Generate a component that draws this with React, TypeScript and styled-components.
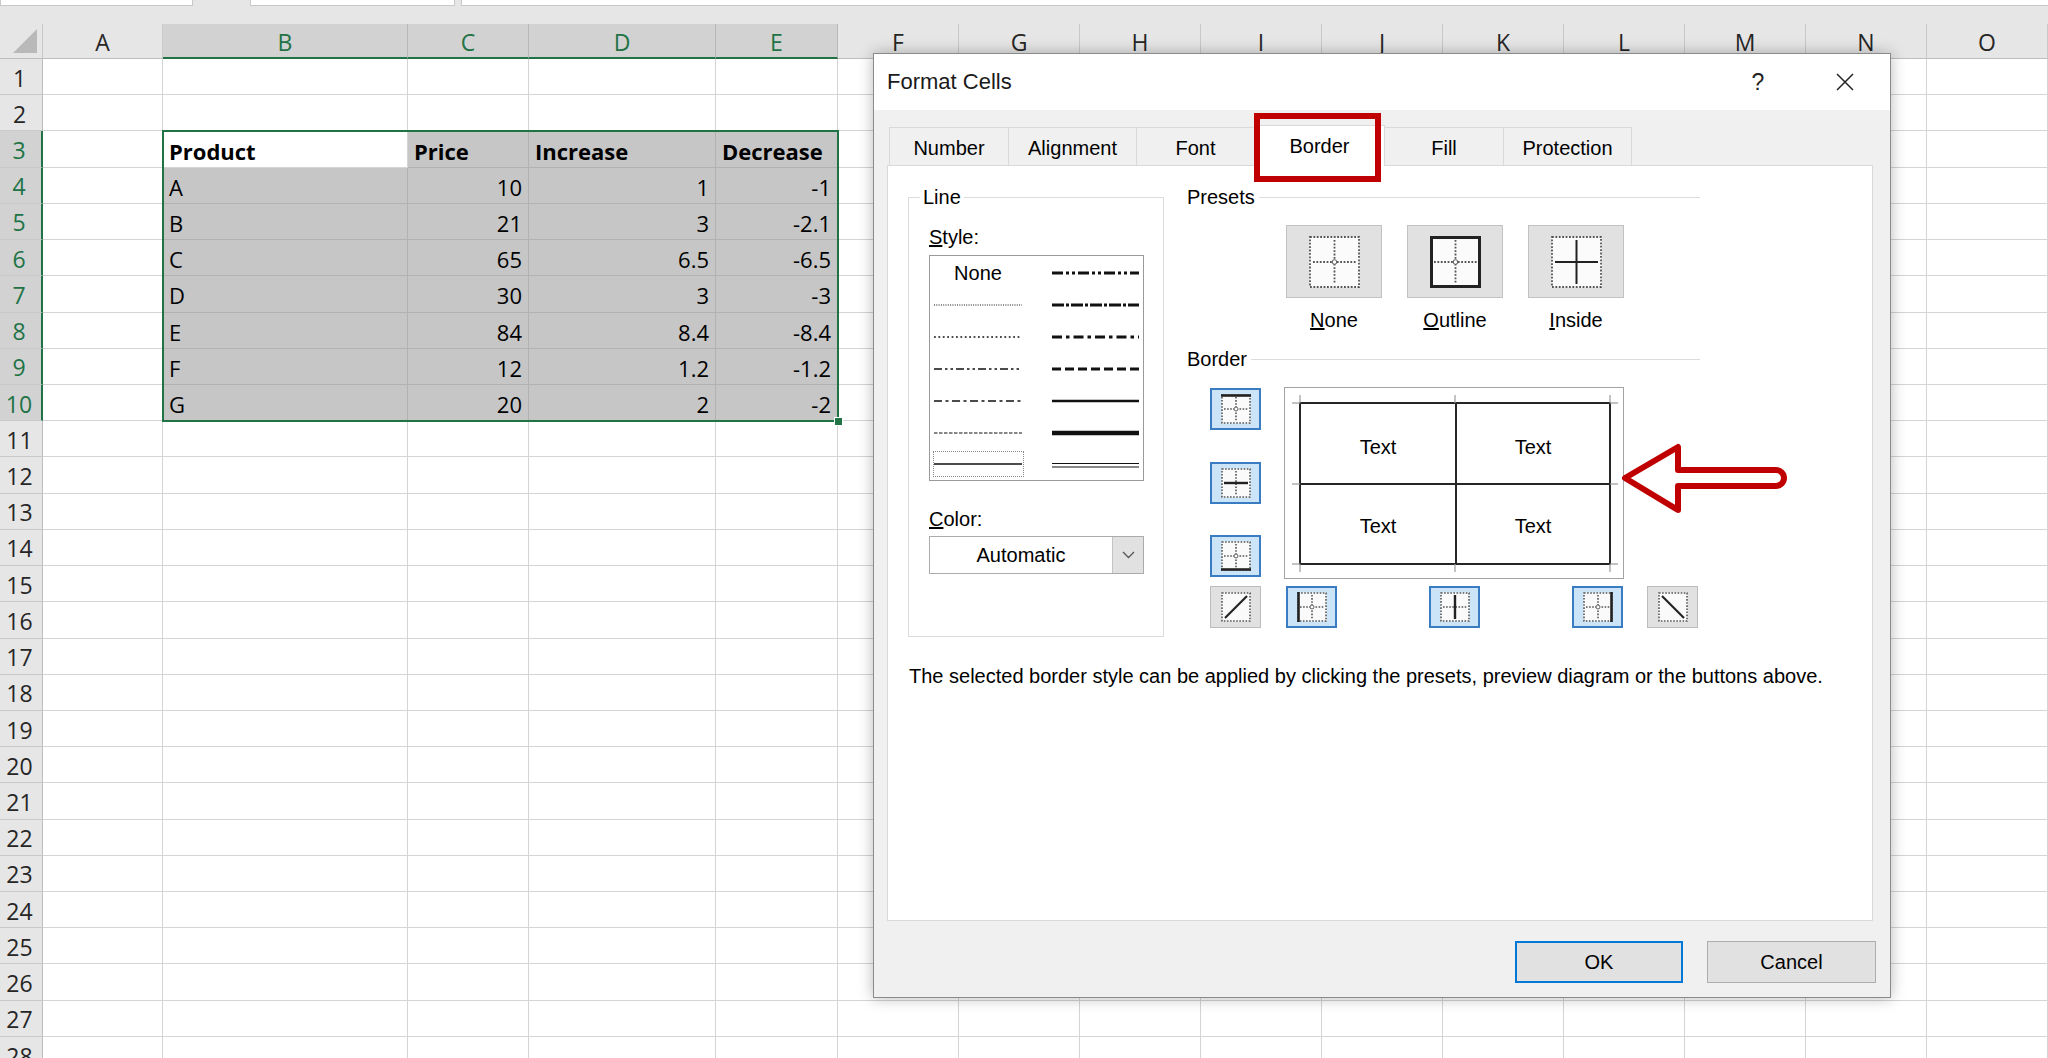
import React from 'react';
import styled, { createGlobalStyle, css } from 'styled-components';

const GREEN = '#217346';
const ROW_H = 36.22;

const GlobalStyle = createGlobalStyle`
  html, body { margin: 0; padding: 0; background: #fff; overflow: hidden; }
  #root { width: 2048px; height: 1058px; }
  *, *::before, *::after { box-sizing: border-box; }
`;

/* ---------------- spreadsheet ---------------- */

const Screen = styled.div`
  position: relative;
  width: 2048px;
  height: 1058px;
  overflow: hidden;
  background: #fff;
  font-family: "Open Sans", "Noto Sans", sans-serif;
`;

const TopStrip = styled.div`
  display: flex;
  height: 24px;
  background: #e6e6e6;
`;

const FieldStub = styled.div<{ $w: number; $ml: number }>`
  flex: none;
  width: ${p => p.$w}px;
  margin-left: ${p => p.$ml}px;
  height: 6px;
  background: #fff;
  border: 1px solid #c8c8c8;
  border-top: none;
`;

const HeaderRow = styled.div`
  display: flex;
  height: 35px;
  background: #e6e6e6;
`;

const Corner = styled.div`
  position: relative;
  flex: none;
  width: 43px;
  border-right: 1px solid #c6c6c6;
  border-bottom: 1px solid #bdbdbd;
  &::after {
    content: '';
    position: absolute;
    right: 5px;
    bottom: 5px;
    border-style: solid;
    border-width: 0 0 24px 24px;
    border-color: transparent transparent #b9b9b9 transparent;
  }
`;

const ColHeader = styled.div<{ $w: number; $sel?: boolean }>`
  flex: none;
  width: ${p => p.$w}px;
  display: flex;
  align-items: center;
  justify-content: center;
  padding-top: 2px;
  font-size: 23px;
  color: ${p => (p.$sel ? GREEN : '#262626')};
  background: ${p => (p.$sel ? '#d2d2d2' : '#e6e6e6')};
  border-right: 1px solid ${p => (p.$sel ? '#b8b8b8' : '#c9c9c9')};
  border-bottom: ${p => (p.$sel ? `2px solid ${GREEN}` : '1px solid #bdbdbd')};
`;

const Row = styled.div`
  display: flex;
  height: ${ROW_H}px;
`;

const RowHeader = styled.div<{ $sel?: boolean }>`
  flex: none;
  width: 43px;
  display: flex;
  align-items: center;
  justify-content: center;
  padding: 2px 3px 0 0;
  font-size: 23px;
  color: ${p => (p.$sel ? GREEN : '#262626')};
  background: ${p => (p.$sel ? '#d2d2d2' : '#e6e6e6')};
  border-right: ${p => (p.$sel ? `2px solid ${GREEN}` : '1px solid #bdbdbd')};
  border-bottom: 1px solid #c9c9c9;
`;

const Cell = styled.div<{ $w: number; $sel?: boolean; $right?: boolean; $bold?: boolean }>`
  flex: none;
  width: ${p => p.$w}px;
  display: flex;
  align-items: center;
  justify-content: ${p => (p.$right ? 'flex-end' : 'flex-start')};
  padding: 3px 6px 0 6px;
  font-size: 22px;
  font-weight: ${p => (p.$bold ? 700 : 400)};
  color: #000;
  white-space: nowrap;
  background: ${p => (p.$sel ? '#c6c6c6' : '#fff')};
  border-right: 1px solid ${p => (p.$sel ? '#b2b2b2' : '#d4d4d4')};
  border-bottom: 1px solid ${p => (p.$sel ? '#b2b2b2' : '#d4d4d4')};
`;

const SelectionFrame = styled.div`
  position: absolute;
  left: 162px;
  top: 130px;
  width: 677px;
  height: 292px;
  border: 2px solid ${GREEN};
  pointer-events: none;
`;

const FillHandle = styled.div`
  position: absolute;
  left: 834px;
  top: 417px;
  width: 9px;
  height: 9px;
  background: ${GREEN};
  border: 1px solid #fff;
`;

/* ---------------- dialog ---------------- */

const Dialog = styled.div`
  position: absolute;
  left: 873px;
  top: 53px;
  width: 1018px;
  height: 945px;
  display: flex;
  flex-direction: column;
  border: 1px solid #8a8a8a;
  background: #f0f0f0;
  box-shadow: 0 0 14px rgba(0, 0, 0, 0.28);
  font-family: "Liberation Sans", Arial, sans-serif;
  font-size: 20px;
  color: #000;
`;

const TitleBar = styled.div`
  flex: none;
  height: 56px;
  display: flex;
  align-items: center;
  padding-left: 13px;
  background: #fff;
`;

const Title = styled.div`
  flex: 1;
  font-size: 22px;
  color: #1a1a1a;
`;

const TitleButton = styled.div<{ $mr: number }>`
  flex: none;
  width: 46px;
  height: 46px;
  margin-right: ${p => p.$mr}px;
  display: flex;
  align-items: center;
  justify-content: center;
  font-size: 23px;
  color: #222;
`;

const Body = styled.div`
  flex: 1;
  display: flex;
  flex-direction: column;
  padding: 17px 17px 0 13px;
`;

const TabStrip = styled.div`
  position: relative;
  z-index: 1;
  display: flex;
  align-items: flex-start;
  height: 38px;
  padding-left: 3px;
`;

const Tab = styled.div<{ $w: number; $active?: boolean }>`
  position: relative;
  flex: none;
  width: ${p => p.$w}px;
  height: 38px;
  margin-left: -1px;
  display: flex;
  align-items: center;
  justify-content: center;
  padding-top: 4px;
  border: 1px solid #d9d9d9;
  border-bottom: none;
  background: #f0f0f0;
  ${p =>
    p.$active &&
    css`
      z-index: 2;
      height: 41px;
      margin-top: -2px;
      padding-top: 0;
      background: #fff;
      &::after {
        content: '';
        position: absolute;
        left: -1px;
        top: -13px;
        width: 127px;
        height: 69px;
        border: 6px solid #c00000;
      }
    `}
`;

const Panel = styled.div`
  flex: none;
  height: 756px;
  background: #fff;
  border: 1px solid #d9d9d9;
  padding: 31px 0 0 20px;
`;

const TopArea = styled.div`
  display: flex;
  align-items: flex-start;
`;

const LineGroup = styled.div`
  position: relative;
  flex: none;
  width: 256px;
  height: 440px;
  border: 1px solid #dcdcdc;
  padding: 28px 0 0 20px;
`;

const GroupLegend = styled.div`
  position: absolute;
  top: -12px;
  left: 11px;
  padding: 0 3px;
  line-height: 23px;
  background: #fff;
`;

const FieldLabel = styled.div<{ $mt?: number }>`
  height: 23px;
  line-height: 23px;
  margin-top: ${p => p.$mt ?? 0}px;
`;

const StyleList = styled.div`
  margin-top: 6px;
  width: 215px;
  height: 226px;
  border: 1px solid #9a9a9a;
  padding-top: 1px;
  display: grid;
  grid-template-columns: 96px 1fr;
  grid-auto-rows: 32px;
`;

const StyleCell = styled.div<{ $right?: boolean }>`
  display: flex;
  align-items: center;
  justify-content: ${p => (p.$right ? 'flex-start' : 'center')};
  padding-left: ${p => (p.$right ? 26 : 0)}px;
`;

const FocusRect = styled.div`
  width: 91px;
  height: 26px;
  margin-top: -2px;
  display: flex;
  align-items: center;
  justify-content: center;
  border: 1px dotted #8a8a8a;
`;

const Dropdown = styled.div`
  margin-top: 5px;
  width: 215px;
  height: 38px;
  display: flex;
  border: 1px solid #ababab;
  background: #fff;
`;

const DropText = styled.div`
  flex: 1;
  text-align: center;
  line-height: 36px;
`;

const DropButton = styled.div`
  flex: none;
  width: 31px;
  display: flex;
  align-items: center;
  justify-content: center;
  background: #e1e1e1;
  border-left: 1px solid #c4c4c4;
`;

const RightCol = styled.div`
  flex: none;
  width: 513px;
  margin-left: 23px;
  margin-top: -11px;
`;

const SectionHeader = styled.div<{ $mt?: number }>`
  display: flex;
  align-items: center;
  gap: 4px;
  height: 23px;
  line-height: 23px;
  margin-top: ${p => p.$mt ?? 0}px;
  &::after {
    content: '';
    flex: 1;
    height: 0;
    border-top: 1px solid #dcdcdc;
  }
`;

const PresetRow = styled.div`
  display: flex;
  gap: 25px;
  margin-top: 16px;
  padding-left: 99px;
`;

const PresetItem = styled.div`
  display: flex;
  flex-direction: column;
  align-items: center;
  width: 96px;
`;

const PresetButton = styled.div`
  width: 96px;
  height: 73px;
  display: flex;
  align-items: center;
  justify-content: center;
  background: #e1e1e1;
  border: 1px solid #c2c2c2;
`;

const PresetLabel = styled.div`
  margin-top: 11px;
  line-height: 23px;
  height: 23px;
`;

const BorderGrid = styled.div`
  display: grid;
  grid-template-columns: 51px 340px 51px;
  grid-template-rows: 192px 42px;
  column-gap: 23px;
  row-gap: 7px;
  margin-top: 16px;
  margin-left: 23px;
`;

const SideToggles = styled.div`
  display: flex;
  flex-direction: column;
  justify-content: space-between;
  padding: 1px 0 2px;
`;

const BottomToggles = styled.div`
  display: flex;
  justify-content: space-between;
  padding: 0 1px 0 2px;
`;

const ToggleButton = styled.div<{ $on?: boolean }>`
  width: 51px;
  height: 42px;
  display: flex;
  align-items: center;
  justify-content: center;
  background: ${p => (p.$on ? '#cce4f7' : '#e1e1e1')};
  border: ${p => (p.$on ? '2px solid #3a7cc2' : '1px solid #bcbcbc')};
`;

const Preview = styled.div`
  position: relative;
  width: 340px;
  height: 192px;
  border: 1px solid #a3a3a3;
  background: #fff;
  padding: 14px 12px 13px 14px;
`;

const PreviewTable = styled.div`
  display: grid;
  grid-template-columns: 156px 1fr;
  grid-template-rows: 81px 1fr;
  height: 100%;
  border: 2px solid #262626;
`;

const PreviewCell = styled.div<{ $r?: boolean; $b?: boolean }>`
  display: flex;
  align-items: center;
  justify-content: center;
  padding-top: ${p => (p.$b ? 7 : 4)}px;
  border-right: ${p => (p.$r ? '2px solid #262626' : 'none')};
  border-bottom: ${p => (p.$b ? '2px solid #262626' : 'none')};
`;

const TickLayer = styled.svg`
  position: absolute;
  left: 0;
  top: 0;
  pointer-events: none;
`;

const Description = styled.div`
  margin-top: 28px;
  margin-left: 1px;
  line-height: 23px;
  white-space: nowrap;
`;

const ButtonRow = styled.div`
  display: flex;
  justify-content: flex-end;
  gap: 24px;
  margin-top: 20px;
  margin-right: -3px;
`;

const DialogButton = styled.div<{ $w: number; $primary?: boolean }>`
  width: ${p => p.$w}px;
  height: 42px;
  display: flex;
  align-items: center;
  justify-content: center;
  background: #e1e1e1;
  border: ${p => (p.$primary ? '2px solid #0078d7' : '1px solid #adadad')};
`;

const Arrow = styled.svg`
  position: absolute;
  left: 1610px;
  top: 435px;
  pointer-events: none;
`;

/* ---------------- drawings ---------------- */

const DOT = '#555';

const PresetIcon: React.FC<{ kind: 'none' | 'outline' | 'inside' }> = ({ kind }) => (
  <svg width="51" height="52" viewBox="0 0 51 52">
    <rect x="0.5" y="0.5" width="50" height="51" fill="#fbfbfb" />
    {kind === 'outline' ? (
      <rect x="1.5" y="1.5" width="48" height="49" fill="none" stroke="#222" strokeWidth="3" />
    ) : (
      <rect x="1" y="1" width="49" height="50" fill="none" stroke={DOT} strokeWidth="1.8" strokeDasharray="1.8 1.6" />
    )}
    {kind === 'inside' ? (
      <>
        <line x1="25.5" y1="4" x2="25.5" y2="48" stroke="#222" strokeWidth="2" />
        <line x1="4" y1="26" x2="47" y2="26" stroke="#222" strokeWidth="2" />
      </>
    ) : (
      <>
        <line x1="25.5" y1="4" x2="25.5" y2="48" stroke={DOT} strokeWidth="1.8" strokeDasharray="1.8 1.6" />
        <line x1="4" y1="26" x2="47" y2="26" stroke={DOT} strokeWidth="1.8" strokeDasharray="1.8 1.6" />
        <circle cx="25.5" cy="26" r="2.3" fill="#fff" stroke={DOT} strokeWidth="1" />
      </>
    )}
  </svg>
);

type Side = 'top' | 'hmid' | 'bottom' | 'left' | 'vmid' | 'right' | 'diagUp' | 'diagDown';

const ToggleIcon: React.FC<{ side: Side }> = ({ side }) => {
  const diag = side === 'diagUp' || side === 'diagDown';
  return (
    <svg width="30" height="30" viewBox="0 0 30 30">
      <rect x="0.5" y="0.5" width="29" height="29" fill="#fafafa" />
      <rect x="1" y="1" width="28" height="28" fill="none" stroke={DOT} strokeWidth="1.6" strokeDasharray="1.6 1.5" />
      {!diag && (
        <>
          {side !== 'vmid' && (
            <line x1="15" y1="3" x2="15" y2="27" stroke={DOT} strokeWidth="1.6" strokeDasharray="1.6 1.5" />
          )}
          {side !== 'hmid' && (
            <line x1="3" y1="15" x2="27" y2="15" stroke={DOT} strokeWidth="1.6" strokeDasharray="1.6 1.5" />
          )}
          {side !== 'hmid' && side !== 'vmid' && (
            <circle cx="15" cy="15" r="2" fill="#fff" stroke={DOT} strokeWidth="0.9" />
          )}
        </>
      )}
      {side === 'top' && <line x1="0" y1="1.5" x2="30" y2="1.5" stroke="#222" strokeWidth="2.6" />}
      {side === 'bottom' && <line x1="0" y1="28.5" x2="30" y2="28.5" stroke="#222" strokeWidth="2.6" />}
      {side === 'left' && <line x1="1.5" y1="0" x2="1.5" y2="30" stroke="#222" strokeWidth="2.6" />}
      {side === 'right' && <line x1="28.5" y1="0" x2="28.5" y2="30" stroke="#222" strokeWidth="2.6" />}
      {side === 'hmid' && <line x1="3" y1="15" x2="27" y2="15" stroke="#222" strokeWidth="2.4" />}
      {side === 'vmid' && <line x1="15" y1="3" x2="15" y2="27" stroke="#222" strokeWidth="2.4" />}
      {side === 'diagUp' && <line x1="4" y1="26" x2="26" y2="4" stroke="#222" strokeWidth="2.2" />}
      {side === 'diagDown' && <line x1="4" y1="4" x2="26" y2="26" stroke="#222" strokeWidth="2.2" />}
    </svg>
  );
};

type LineSpec = { dash?: string; w?: number; double?: boolean; none?: boolean; selected?: boolean };

const LineSample: React.FC<{ spec: LineSpec; width: number }> = ({ spec, width }) => (
  <svg width={width} height="10" viewBox={`0 0 ${width} 10`}>
    {spec.double ? (
      <>
        <line x1="0" y1="3.5" x2={width} y2="3.5" stroke="#111" strokeWidth="1.2" />
        <line x1="0" y1="7" x2={width} y2="7" stroke="#111" strokeWidth="1.2" />
      </>
    ) : (
      <line
        x1="0"
        y1="5"
        x2={width}
        y2="5"
        stroke="#111"
        strokeWidth={spec.w ?? 1}
        strokeDasharray={spec.dash}
      />
    )}
  </svg>
);

const leftLines: LineSpec[] = [
  { none: true },
  { dash: '1 1.3', w: 1.1 },
  { dash: '1.8 2.6', w: 1.6 },
  { dash: '8 3 2.5 3 2.5 3', w: 1.4 },
  { dash: '8 3.5 3 3.5', w: 1.4 },
  { dash: '3.5 1.5', w: 1.2 },
  { w: 1.6, selected: true },
];

const rightLines: LineSpec[] = [
  { dash: '11 3 3 3 3 3', w: 3 },
  { dash: '12 2 3 2', w: 3 },
  { dash: '10 4 3.5 4', w: 3 },
  { dash: '9 4', w: 3 },
  { w: 2.6 },
  { w: 4.6 },
  { double: true },
];

/* ---------------- data ---------------- */

const colDefs = [
  { k: 'A', w: 120 },
  { k: 'B', w: 245 },
  { k: 'C', w: 121 },
  { k: 'D', w: 187 },
  { k: 'E', w: 122 },
  ...['F', 'G', 'H', 'I', 'J', 'K', 'L', 'M', 'N', 'O'].map(k => ({ k, w: 121 })),
];

const tableData: Record<number, string[]> = {
  3: ['Product', 'Price', 'Increase', 'Decrease'],
  4: ['A', '10', '1', '-1'],
  5: ['B', '21', '3', '-2.1'],
  6: ['C', '65', '6.5', '-6.5'],
  7: ['D', '30', '3', '-3'],
  8: ['E', '84', '8.4', '-8.4'],
  9: ['F', '12', '1.2', '-1.2'],
  10: ['G', '20', '2', '-2'],
};

const selCols = ['B', 'C', 'D', 'E'];
const rows = Array.from({ length: 28 }, (_, i) => i + 1);

const tabs = [
  { t: 'Number', w: 120 },
  { t: 'Alignment', w: 129 },
  { t: 'Font', w: 119 },
  { t: 'Border', w: 131, active: true },
  { t: 'Fill', w: 120 },
  { t: 'Protection', w: 129 },
];

const ticks: [number, number, number, number][] = [
  [15, 7, 15, 15], [170, 7, 170, 15], [325, 7, 325, 15],
  [15, 176, 15, 184], [170, 176, 170, 184], [325, 176, 325, 184],
  [7, 15, 15, 15], [7, 96, 15, 96], [7, 176, 15, 176],
  [325, 15, 333, 15], [325, 96, 333, 96], [325, 176, 333, 176],
];

export default function App() {
  return (
    <Screen>
      <GlobalStyle />
      <TopStrip>
        <FieldStub $w={193} $ml={0} />
        <FieldStub $w={205} $ml={57} />
        <FieldStub $w={1600} $ml={6} />
      </TopStrip>
      <HeaderRow>
        <Corner />
        {colDefs.map(c => (
          <ColHeader key={c.k} $w={c.w} $sel={selCols.includes(c.k)}>
            {c.k}
          </ColHeader>
        ))}
      </HeaderRow>
      {rows.map(r => {
        const rowSel = r >= 3 && r <= 10;
        const vals = tableData[r];
        return (
          <Row key={r}>
            <RowHeader $sel={rowSel}>{r}</RowHeader>
            {colDefs.map(c => {
              const ci = selCols.indexOf(c.k);
              const inSel = rowSel && ci >= 0;
              const active = r === 3 && c.k === 'B';
              const text = vals && ci >= 0 ? vals[ci] : '';
              return (
                <Cell
                  key={c.k}
                  $w={c.w}
                  $sel={inSel && !active}
                  $right={r > 3 && ci > 0}
                  $bold={r === 3}
                >
                  {text}
                </Cell>
              );
            })}
          </Row>
        );
      })}
      <SelectionFrame />
      <FillHandle />

      <Dialog>
        <TitleBar>
          <Title>Format Cells</Title>
          <TitleButton $mr={41}>?</TitleButton>
          <TitleButton $mr={22}>
            <svg width="18" height="18" viewBox="0 0 18 18">
              <path d="M1 1 L17 17 M17 1 L1 17" stroke="#222" strokeWidth="1.5" fill="none" />
            </svg>
          </TitleButton>
        </TitleBar>
        <Body>
          <TabStrip>
            {tabs.map(t => (
              <Tab key={t.t} $w={t.w} $active={t.active}>
                {t.t}
              </Tab>
            ))}
          </TabStrip>
          <Panel>
            <TopArea>
              <LineGroup>
                <GroupLegend>Line</GroupLegend>
                <FieldLabel>
                  <u>S</u>tyle:
                </FieldLabel>
                <StyleList>
                  {leftLines.map((l, i) => (
                    <React.Fragment key={i}>
                      <StyleCell>
                        {l.none ? (
                          'None'
                        ) : l.selected ? (
                          <FocusRect>
                            <LineSample spec={l} width={88} />
                          </FocusRect>
                        ) : (
                          <LineSample spec={l} width={88} />
                        )}
                      </StyleCell>
                      <StyleCell $right>
                        <LineSample spec={rightLines[i]} width={87} />
                      </StyleCell>
                    </React.Fragment>
                  ))}
                </StyleList>
                <FieldLabel $mt={27}>
                  <u>C</u>olor:
                </FieldLabel>
                <Dropdown>
                  <DropText>Automatic</DropText>
                  <DropButton>
                    <svg width="13" height="8" viewBox="0 0 13 8">
                      <path d="M1 1 L6.5 6.5 L12 1" stroke="#555" strokeWidth="1.3" fill="none" />
                    </svg>
                  </DropButton>
                </Dropdown>
              </LineGroup>

              <RightCol>
                <SectionHeader>Presets</SectionHeader>
                <PresetRow>
                  <PresetItem>
                    <PresetButton>
                      <PresetIcon kind="none" />
                    </PresetButton>
                    <PresetLabel>
                      <u>N</u>one
                    </PresetLabel>
                  </PresetItem>
                  <PresetItem>
                    <PresetButton>
                      <PresetIcon kind="outline" />
                    </PresetButton>
                    <PresetLabel>
                      <u>O</u>utline
                    </PresetLabel>
                  </PresetItem>
                  <PresetItem>
                    <PresetButton>
                      <PresetIcon kind="inside" />
                    </PresetButton>
                    <PresetLabel>
                      <u>I</u>nside
                    </PresetLabel>
                  </PresetItem>
                </PresetRow>

                <SectionHeader $mt={16}>Border</SectionHeader>
                <BorderGrid>
                  <SideToggles>
                    <ToggleButton $on>
                      <ToggleIcon side="top" />
                    </ToggleButton>
                    <ToggleButton $on>
                      <ToggleIcon side="hmid" />
                    </ToggleButton>
                    <ToggleButton $on>
                      <ToggleIcon side="bottom" />
                    </ToggleButton>
                  </SideToggles>
                  <Preview>
                    <PreviewTable>
                      <PreviewCell $r $b>Text</PreviewCell>
                      <PreviewCell $b>Text</PreviewCell>
                      <PreviewCell $r>Text</PreviewCell>
                      <PreviewCell>Text</PreviewCell>
                    </PreviewTable>
                    <TickLayer width="338" height="190" viewBox="0 0 338 190">
                      {ticks.map(([x1, y1, x2, y2], i) => (
                        <line key={i} x1={x1} y1={y1} x2={x2} y2={y2} stroke="#9a9a9a" strokeWidth="1.2" />
                      ))}
                    </TickLayer>
                  </Preview>
                  <div />
                  <ToggleButton>
                    <ToggleIcon side="diagUp" />
                  </ToggleButton>
                  <BottomToggles>
                    <ToggleButton $on>
                      <ToggleIcon side="left" />
                    </ToggleButton>
                    <ToggleButton $on>
                      <ToggleIcon side="vmid" />
                    </ToggleButton>
                    <ToggleButton $on>
                      <ToggleIcon side="right" />
                    </ToggleButton>
                  </BottomToggles>
                  <ToggleButton>
                    <ToggleIcon side="diagDown" />
                  </ToggleButton>
                </BorderGrid>
              </RightCol>
            </TopArea>
            <Description>
              The selected border style can be applied by clicking the presets, preview diagram or the buttons above.
            </Description>
          </Panel>
          <ButtonRow>
            <DialogButton $w={168} $primary>
              OK
            </DialogButton>
            <DialogButton $w={169}>Cancel</DialogButton>
          </ButtonRow>
        </Body>
      </Dialog>

      <Arrow width="190" height="90" viewBox="0 0 190 90">
        <path
          d="M15 43 L68 12 L68 35 L166 35 A8 8 0 0 1 166 51 L68 51 L68 75 Z"
          fill="none"
          stroke="#c00000"
          strokeWidth="6"
          strokeLinejoin="round"
        />
      </Arrow>
    </Screen>
  );
}
